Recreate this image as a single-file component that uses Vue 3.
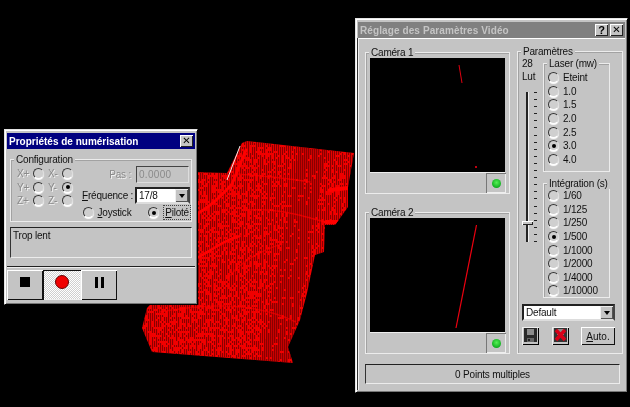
<script setup>
import { computed } from 'vue'

const axes = [
  { a: 'X+', b: 'X-', on: '' },
  { a: 'Y+', b: 'Y-', on: 'b' },
  { a: 'Z+', b: 'Z-', on: '' },
]
const lasers = ['Eteint', '1.0', '1.5', '2.0', '2.5', '3.0', '4.0']
const integrations = ['1/60', '1/125', '1/250', '1/500', '1/1000', '1/2000', '1/4000', '1/10000']
const ticks = Array.from({ length: 22 }, (_, i) => i)

const outline =
  '242,143 247,141 354,153 348,187 348,207 335,225 325,225 324,252 315,255 307,293 300,320 288,347 293,363 152,352 142,328 147,308 190,263 190,172 227,173 230,167'

const dots = computed(() => {
  let d = ''
  let seed = 7
  const rnd = () => {
    seed = (seed * 16807) % 2147483647
    return seed / 2147483647
  }
  for (let y = 140; y < 364; y += 2) {
    for (let x = 140 + (y % 4); x < 356; x += 2) {
      const moire = Math.sin(x * 0.7 + y * 0.17) + Math.sin(y * 0.9 - x * 0.13)
      const band = 312 - (y - 150) * 0.18
      const dark = Math.abs(x - band) < 14 ? 0.26 : x > 260 ? 0.1 : 0
      if (rnd() * 0.8 + moire * 0.1 + dark > 0.3) d += `M${x} ${y}h${dark > 0.2 ? 1.4 : 1.1}`
    }
  }
  return d
})
</script>

<template>
  <div class="desktop">
    <svg class="cloud" width="630" height="407" viewBox="0 0 630 407">
      <defs>
        <clipPath id="cloudclip"><polygon :points="outline" /></clipPath>
      </defs>
      <g clip-path="url(#cloudclip)">
        <rect x="130" y="130" width="240" height="240" fill="#f00000" />
        <path :d="dots" stroke="#240000" stroke-width="1" fill="none" />
        <g fill="none" stroke="#ff0000" stroke-linecap="round" stroke-dasharray="3 1.5">
          <path d="M197 214C212 205 222 195 232 184L246 150" stroke-width="3" />
          <path d="M197 258C215 248 225 240 240 236" stroke-width="2.5" />
          <path d="M238 174C262 176 285 178 310 182" stroke-width="1.5" opacity=".7" />
          <path d="M250 210C275 208 300 215 325 222" stroke-width="1.5" opacity=".7" />
          <path d="M228 278C240 262 262 250 282 244" stroke-width="1.5" opacity=".6" />
          <path d="M330 190L348 188M326 222L340 222" stroke-width="4" stroke-dasharray="none" />
          <path d="M160 312C200 305 250 300 296 322" stroke-width="1.5" opacity=".6" />
        </g>
      </g>
      <path d="M240 146L227 180" stroke="#fff" stroke-width="1" opacity=".9" />
    </svg>

    <section class="win scan">
      <header class="title blue">
        <span>Propriétés de numérisation</span>
        <button class="capbtn">✕</button>
      </header>
      <fieldset class="group config">
        <legend>Configuration</legend>
        <div class="config-grid">
          <div class="axes">
            <template v-for="r in axes" :key="r.a">
              <span class="off">{{ r.a }}</span><i class="radio" />
              <span class="off">{{ r.b }}</span><i class="radio" :class="{ on: r.on === 'b' }" />
            </template>
          </div>
          <div class="controls">
            <div class="ctl-row pas">
              <span class="off">Pas :</span>
              <div class="edit">0.0000</div>
            </div>
            <div class="ctl-row">
              <span class="nowrap"><u>F</u>réquence :</span>
              <div class="combo small"><span>17/8</span><b class="arrow"><i /></b></div>
            </div>
            <div class="ctl-row modes">
              <label class="opt"><i class="radio" /><span><u>J</u>oystick</span></label>
              <label class="opt"><i class="radio on" /><span class="focus"><u>P</u>iloté</span></label>
            </div>
          </div>
        </div>
      </fieldset>
      <div class="message">Trop lent</div>
      <div class="toolbar">
        <button class="tool"><i class="stop" /></button>
        <button class="tool pressed"><i class="rec" /></button>
        <button class="tool"><i class="pause" /></button>
      </div>
    </section>

    <section class="win video">
      <header class="title grey">
        <span>Réglage des Paramètres Vidéo</span>
        <div class="caps"><button class="capbtn q">?</button><button class="capbtn">✕</button></div>
      </header>
      <div class="panel">
        <div class="video-body">
          <div class="cams">
            <fieldset class="group cam">
              <legend>Caméra 1</legend>
              <svg class="view" width="135" height="114" viewBox="0 0 135 114">
                <path d="M89 7L92 25" stroke="#e00010" fill="none" />
                <rect x="105" y="108" width="2" height="2" fill="#c00010" />
              </svg>
              <div class="led-row"><span class="led-btn"><i class="led" /></span></div>
            </fieldset>
            <fieldset class="group cam">
              <legend>Caméra 2</legend>
              <svg class="view" width="135" height="114" viewBox="0 0 135 114">
                <path d="M106.5 7L86 110" stroke="#f00010" stroke-width="1.2" fill="none" />
              </svg>
              <div class="led-row"><span class="led-btn"><i class="led" /></span></div>
            </fieldset>
          </div>
          <fieldset class="group params">
            <legend>Paramètres</legend>
            <div class="params-main">
              <div class="lut">
                <span>28</span>
                <span>Lut</span>
                <div class="slider">
                  <div class="track"><i class="thumb" /></div>
                  <div class="ticks"><i v-for="t in ticks" :key="t" /></div>
                </div>
              </div>
              <div class="sets">
                <fieldset class="group inner laser">
                  <legend>Laser (mw)</legend>
                  <label v-for="l in lasers" :key="l" class="opt line">
                    <i class="radio" :class="{ on: l === '3.0' }" /><span>{{ l }}</span>
                  </label>
                </fieldset>
                <fieldset class="group inner integ">
                  <legend>Intégration (s)</legend>
                  <label v-for="l in integrations" :key="l" class="opt line">
                    <i class="radio" :class="{ on: l === '1/500' }" /><span>{{ l }}</span>
                  </label>
                </fieldset>
              </div>
            </div>
            <div class="combo wide"><span>Default</span><b class="arrow"><i /></b></div>
            <div class="actions">
              <button class="iconbtn">
                <svg width="13" height="14" viewBox="0 0 13 14">
                  <path d="M0 0H13V14H0Z" fill="#2a2a2a" />
                  <path d="M3 1H10V7H3Z" fill="#8c8c8c" />
                  <path d="M3 10H10V14H3Z" fill="#666" />
                  <path d="M4 11H6V13H4Z" fill="#222" />
                </svg>
              </button>
              <button class="iconbtn">
                <svg width="13" height="14" viewBox="0 0 13 14">
                  <path d="M0 0H13V14H0Z" fill="#333" />
                  <path d="M3 1H10V7H3Z" fill="#888" />
                  <path d="M2 2L11 12M11 2L2 12" stroke="#d80018" stroke-width="3.5" />
                </svg>
              </button>
              <button class="auto"><u>A</u>uto.</button>
            </div>
          </fieldset>
        </div>
        <div class="points">0 Points multiples</div>
      </div>
    </section>
  </div>
</template>

<style scoped>
.desktop {
  position: relative;
  width: 630px;
  height: 407px;
  background: #000;
  overflow: hidden;
  font: 10px/13px "Liberation Sans", Arial, sans-serif;
  letter-spacing: -0.2px;
  color: #111;
  filter: blur(0.35px);
}
.cloud { position: absolute; left: 0; top: 0; }

.win {
  position: absolute;
  box-sizing: border-box;
  background: #c4c4c4;
  display: flex;
  flex-direction: column;
  border: 1px solid #000;
  border-top-color: #e4e4e4;
  border-left-color: #e4e4e4;
  box-shadow: inset 1px 1px #fff, inset -1px -1px #777;
}
.scan { left: 4px; top: 129px; width: 194px; height: 176px; padding: 3px 2px 2px; }
.video { left: 355px; top: 18px; width: 273px; height: 375px; padding: 3px 2px 2px 2px; }

.title {
  height: 16px;
  flex: none;
  display: flex;
  align-items: center;
  justify-content: space-between;
  padding: 0 2px;
  font-weight: 700;
  font-size: 10px;
  letter-spacing: 0;
}
.blue { background: #000080; color: #fff; }
.grey { background: #808080; color: #c4c4c4; letter-spacing: 0.1px; }
.caps { display: flex; gap: 2px; }
.capbtn {
  width: 13px;
  height: 12px;
  padding: 0;
  border: 0;
  background: #c4c4c4;
  box-shadow: inset 1px 1px #fff, inset -1px -1px #222;
  font: 700 10px/12px "DejaVu Sans", sans-serif;
  color: #000;
}
.capbtn.q { font: 700 11px/12px "Liberation Sans", sans-serif; }

.group {
  box-sizing: border-box;
  margin: 0;
  min-width: 0;
  padding: 0;
  border: 1px solid #ececec;
  box-shadow: inset 1px 1px #a2a2a2;
}
.group legend {
  margin-left: 3px;
  padding: 0 2px;
  background: #c4c4c4;
  line-height: 11px;
}

.config { margin: 5px 3px 0; height: 68px; padding: 0 0 0 6px; }
.config legend { margin-left: -3px; }
.config-grid { display: flex; gap: 9px; }
.axes {
  display: grid;
  grid-template-columns: 16px 15px 14px 11px;
  grid-auto-rows: 13.5px;
  align-items: center;
  margin-top: 2px;
  flex: none;
  align-self: flex-start;
}
.off { color: #8a8a8a; text-shadow: 1px 1px #f2f2f2; }
.nowrap { white-space: nowrap; }
.radio {
  display: inline-block;
  flex: none;
  box-sizing: border-box;
  position: relative;
  width: 11px;
  height: 11px;
  border-radius: 50%;
  background: #cfcfcf;
  border: 1px solid;
  border-color: #333 #ddd #fff #333;
  box-shadow: 0 1px 1px #fff;
}
.radio.on::after {
  content: "";
  position: absolute;
  left: 2.5px;
  top: 2.5px;
  width: 4px;
  height: 4px;
  border-radius: 50%;
  background: #000;
}
.controls { flex: 1; display: flex; flex-direction: column; margin-top: 1px; padding-right: 1px; }
.ctl-row { display: flex; align-items: center; justify-content: space-between; }
.ctl-row + .ctl-row { margin-top: 4px; }
.pas { justify-content: flex-end; gap: 5px; padding-right: 1px; }
.edit {
  box-sizing: border-box;
  width: 53px;
  height: 17px;
  padding: 1px 2px;
  color: #8a8a8a;
  background: #c4c4c4;
  border: 1px solid;
  border-color: #444 #ddd #ddd #444;
  letter-spacing: 0.3px;
}
.combo {
  box-sizing: border-box;
  display: flex;
  align-items: center;
  justify-content: space-between;
  flex: none;
  background: #fff;
  border: 2px solid;
  border-color: #222 #444 #ddd #222;
  padding-left: 2px;
}
.combo.small { width: 55px; height: 17px; }
.combo.wide { width: 93px; height: 17px; margin: 6px 0 0 4px; }
.arrow {
  display: flex;
  align-items: center;
  justify-content: center;
  width: 13px;
  height: 100%;
  background: #c4c4c4;
  box-shadow: inset 1px 1px #eee, inset -1px -1px #555;
}
.arrow i {
  width: 0;
  height: 0;
  border: 3.5px solid transparent;
  border-top: 4px solid #000;
  border-bottom: 0;
}
.opt { display: flex; align-items: center; gap: 4px; }
.ctl-row.modes { margin-top: 1px; padding-left: 0.5px; height: 15px; }
.focus { outline: 1px dotted #444; padding: 0 1px; margin-left: 1px; }

.message {
  box-sizing: border-box;
  margin: 5px 3px 0;
  height: 31px;
  padding: 1px 2px;
  border: 1px solid;
  border-color: #222 #ececec #ececec #333;
}
.toolbar {
  margin-top: 8px;
  padding-top: 3px;
  border-top: 1px solid #222;
  box-shadow: inset 0 1px #eee;
  display: flex;
}
.tool {
  width: 36px;
  height: 30px;
  padding: 0;
  border: 0;
  display: flex;
  align-items: center;
  justify-content: center;
  background: #c4c4c4;
  box-shadow: inset 1px 1px #fff, inset -1px -1px #111;
}
.tool.pressed {
  width: 38px;
  background: repeating-conic-gradient(#fff 0 25%, #cfcfcf 0 50%) 0 0 / 2px 2px;
  box-shadow: inset 1px 1px #111, inset -1px -1px #eee;
}
.stop { width: 10px; height: 10px; background: #000; margin-top: -6px; }
.rec { width: 12px; height: 12px; border-radius: 50%; background: #f00000; border: 1px solid #600; margin-top: -6px; }
.pause {
  width: 9px;
  height: 11px;
  margin-top: -6px;
  background: linear-gradient(90deg, #000 0 3px, transparent 3px 6px, #000 6px 9px);
}

.panel {
  flex: 1;
  display: flex;
  flex-direction: column;
  border-left: 1px solid #eee;
  border-top: 1px solid #fff;
  box-shadow: -1px 0 #333;
}
.video-body { flex: 1; display: flex; justify-content: space-between; padding: 6px 2px 0 6px; }
.cams { display: flex; flex-direction: column; gap: 13px; width: 145px; margin-top: 2px; }
.cam { height: 147px; padding: 0 3px 0 4px; }
.cam legend { margin-left: -1px; }
.view { display: block; background: #000; border-bottom: 1px solid #eee; }
.led-row { display: flex; justify-content: flex-end; }
.led-btn {
  box-sizing: border-box;
  width: 20px;
  height: 20px;
  display: flex;
  align-items: center;
  justify-content: center;
  box-shadow: inset 1px 1px #777, inset -1px -1px #eee;
}
.led {
  width: 9px;
  height: 9px;
  border-radius: 50%;
  background: radial-gradient(circle at 50% 40%, #55f055, #10b020 70%, #0a7a14);
}
.params { width: 106px; height: 308px; margin-top: 1px; }
.params-main { display: flex; }
.lut {
  width: 25px;
  padding-left: 4px;
  box-sizing: border-box;
  display: flex;
  flex-direction: column;
  flex: none;
}
.lut > span { height: 13px; }
.slider { display: flex; gap: 5px; margin-top: 9px; height: 152px; padding-left: 4px; }
.track {
  position: relative;
  width: 2px;
  height: 150px;
  background: #222;
  border-right: 1px solid #eee;
}
.thumb {
  position: absolute;
  left: -4px;
  top: 129px;
  width: 11px;
  height: 4px;
  background: #c4c4c4;
  box-shadow: inset 1px 1px #fff, inset -1px -1px #222;
}
.ticks { display: flex; flex-direction: column; justify-content: space-between; height: 150px; }
.ticks i { width: 3px; height: 1px; background: #222; }
.sets { display: flex; flex-direction: column; gap: 6px; padding-top: 1px; }
.inner { width: 67px; }
.inner legend { white-space: nowrap; margin-left: -1px; }
.laser { height: 114px; padding: 2px 0 0 4px; }
.integ { height: 120px; padding: 0 0 0 4px; }
.line { height: 13.6px; }
.actions { display: flex; align-items: flex-start; margin: 6px 0 0 4px; }
.iconbtn {
  box-sizing: border-box;
  width: 17px;
  height: 18px;
  padding: 1px 2px;
  border: 0;
  margin-right: 13px;
  background: #c4c4c4;
  box-shadow: inset 1px 1px #eee, inset -1px -1px #000;
  display: flex;
}
.auto {
  width: 34px;
  height: 18px;
  padding: 0;
  border: 0;
  margin-left: -1px;
  background: #c4c4c4;
  box-shadow: inset 1px 1px #fff, inset -1px -1px #111;
  font: 10px "Liberation Sans", sans-serif;
  color: #111;
}
.points {
  box-sizing: border-box;
  margin: 9px 5px 6px 6px;
  height: 20px;
  line-height: 19px;
  text-align: center;
  border: 1px solid;
  border-color: #222 #ececec #ececec #333;
}
</style>

<style>
html, body { margin: 0; background: #000; overflow: hidden; }
</style>
